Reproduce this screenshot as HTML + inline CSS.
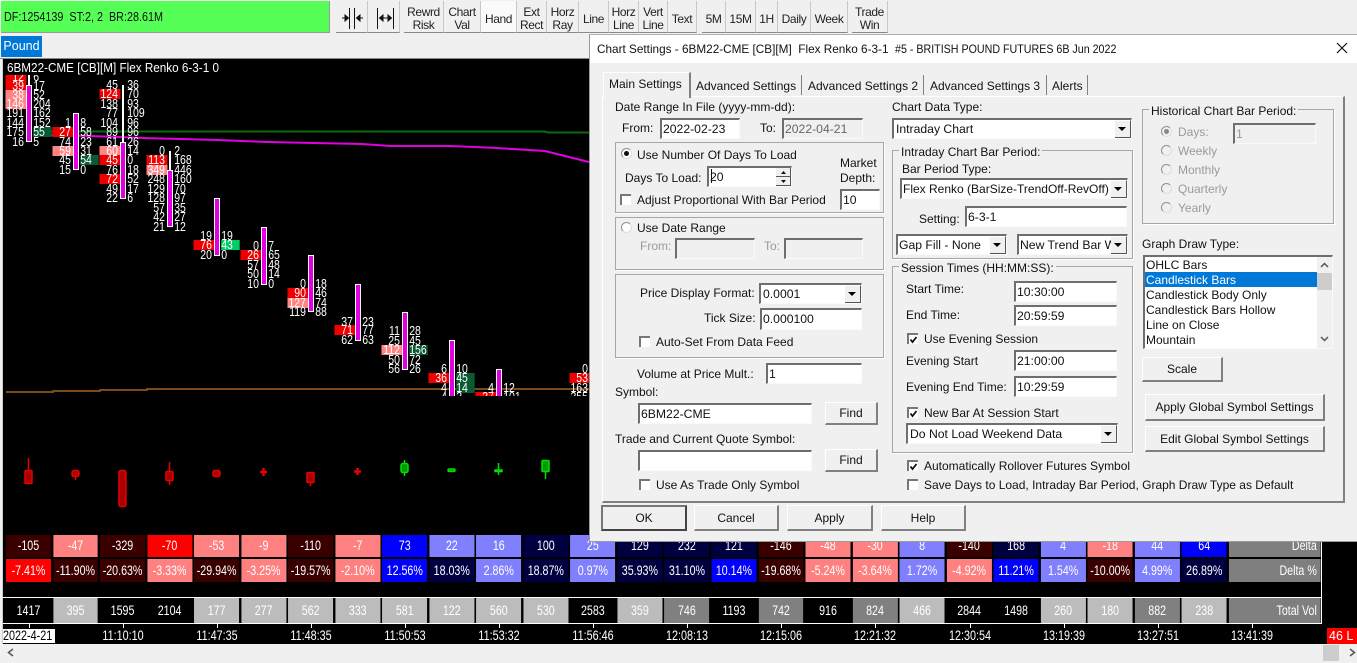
<!DOCTYPE html>
<html><head><meta charset="utf-8"><style>
html,body{margin:0;padding:0;width:1357px;height:663px;overflow:hidden;background:#f0f0f0;font-family:"Liberation Sans",sans-serif;color:#111}
div,span,p,svg{position:absolute;margin:0}
.t{font-size:12px;line-height:16px;white-space:nowrap;color:#111}
.dis{color:#9a9a9a}
.tb{top:1px;height:32px;background:#f0f0f0;border-right:1px solid #c8c8c8;border-bottom:1px solid #8a8a8a;box-sizing:border-box;font-size:12px;letter-spacing:-.4px;line-height:13px;text-align:center;display:flex;align-items:center;justify-content:center;color:#222;padding-top:5px}
.i{background:#fff;border-top:2px solid #6e6e6e;border-left:2px solid #6e6e6e;border-right:1px solid #fafafa;border-bottom:1px solid #fafafa;box-sizing:border-box;font-size:12.2px;line-height:18px;padding-left:1px;white-space:nowrap;overflow:hidden;color:#111}
.d{background:#f0f0f0;color:#666}
.a{right:0;top:0;bottom:0;width:16px;background:#f0f0f0;border-right:1px solid #555;border-bottom:1px solid #555;border-top:1px solid #fff;box-sizing:border-box}
.a:after{content:"";position:absolute;left:3px;top:6px;border:4px solid transparent;border-top:4px solid #000;border-bottom:0}
.g{border:1px solid #a6a6a6;box-shadow:1px 1px 0 #fff;box-sizing:border-box}
.b{background:#f0f0f0;border-top:1px solid #fff;border-left:1px solid #fff;border-right:2px solid #808080;border-bottom:2px solid #808080;box-sizing:border-box;font-size:12px;display:flex;align-items:center;justify-content:center;color:#111;white-space:nowrap}
.c{width:11px;height:11px;background:#fff;border-top:2px solid #777;border-left:2px solid #777;box-sizing:border-box}
.c svg{left:-1px;top:-1px}
.r{width:11px;height:11px;border-radius:50%;background:#fff;border:1px solid #909090;border-right-color:#ddd;border-bottom-color:#ddd;box-sizing:border-box}
.r.on:after{content:"";position:absolute;left:2px;top:2px;width:5px;height:5px;background:#111;border-radius:50%}
.r.off:after{background:#888}
.f{top:0;transform:scaleX(.84);transform-origin:0 0;font-size:12.5px;line-height:10px;color:#fff}
.f p{left:0;width:0;height:10px}
.f b{position:absolute;font-weight:normal;top:0;height:10px;white-space:nowrap;box-sizing:border-box}
.f b:first-child{right:3.5px;width:25px;text-align:right;padding-right:2.500px}
.f b:last-child{left:4.500px;width:22px;text-align:left;padding-left:.5px}
.R{background:#ee0000}.P{background:#ff8585}.G{background:#0a5a34}.L{background:#00cc66}
.w{width:2px;background:#fff}
.m{width:4px;background:#e000e0;border:1px solid #fff}
.row{left:6px;width:calc(1320px/.79);transform:scaleX(.79);transform-origin:0 0;display:flex;font-size:13.5px;color:#fff}
.row span{position:static;display:block;width:calc(45px/.79);margin-right:calc(2.04px/.79);flex:none;text-align:center}
.row span.l{width:calc(92px/.79);margin:0;text-align:right;padding-right:5px;box-sizing:border-box;background:#7f7f7f}
.K{background:#3a0000}.A{background:#ff8080}.E{background:#ff0000}.B{background:#0000ff}.V{background:#8080ff}.N{background:#000040}
.H{background:#000}.S{background:#bcbcbc}.M{background:#808080}
.tm{top:628px;line-height:15px;font-size:13.5px;color:#fff;transform:translateX(-50%) scaleX(.8);white-space:nowrap}
.tk{top:624px;width:1px;height:4px;background:#fff}
</style></head><body>

<div style="left:1px;top:1px;width:329px;height:32px;background:#55ff55;border-right:1px solid #999;border-bottom:1px solid #999;box-sizing:border-box"></div>
<div class="t" style="left:4px;top:9px;white-space:pre;font-size:13px;transform:scaleX(.83);transform-origin:0 0">DF:1254139  ST:2, 2  BR:28.61M</div>

<div class="tb" style="left:336px;width:32px"></div>
<div class="tb" style="left:368px;width:32px"></div>
<svg style="left:336px;top:1px" width="64" height="32" fill="none" stroke="#111" stroke-width="1"><path d="M13.500 7V28M18.500 7V28M6 17H12M21 17H27"/><path d="M9 14L12.500 17L9 20ZM24 14L20.500 17L24 20Z" fill="#111"/><path d="M41.500 7V28M57.500 7V28M44 17H55"/><path d="M47 14L43.500 17L47 20ZM52 14L55.500 17L52 20Z" fill="#111"/></svg>
<div class="tb" style="left:404px;width:40px">Rewrd<br>Risk</div>
<div class="tb" style="left:444px;width:37px">Chart<br>Val</div>
<div class="tb" style="left:481px;width:36px;background:#fafafa">Hand</div>
<div class="tb" style="left:517px;width:30px">Ext<br>Rect</div>
<div class="tb" style="left:547px;width:32px">Horz<br>Ray</div>
<div class="tb" style="left:579px;width:30px">Line</div>
<div class="tb" style="left:609px;width:30px">Horz<br>Line</div>
<div class="tb" style="left:639px;width:29px">Vert<br>Line</div>
<div class="tb" style="left:668px;width:29px">Text</div>
<div class="tb" style="left:702px;width:24px">5M</div>
<div class="tb" style="left:726px;width:30px">15M</div>
<div class="tb" style="left:756px;width:22px">1H</div>
<div class="tb" style="left:778px;width:33px">Daily</div>
<div class="tb" style="left:811px;width:37px">Week</div>
<div class="tb" style="left:852px;width:36px">Trade<br>Win</div>

<div style="left:1px;top:36px;width:41px;height:21px;background:#0078d7;color:#fff;font-size:12.5px;line-height:21px;text-align:center">Pound</div>
<div style="left:0;top:58px;width:1357px;height:1px;background:#888"></div>

<div style="left:2px;top:59px;width:1355px;height:585px;background:#000;border-left:1px solid #ccc"></div>
<div style="left:7px;top:60px;font-size:13px;line-height:16px;color:#fff;white-space:nowrap;transform:scaleX(.9);transform-origin:0 0">6BM22-CME [CB][M] Flex Renko 6-3-1 0</div>

<svg style="left:0;top:0" width="1357" height="663" fill="none">
<path d="M50 131.500H545L548 132.500H600" stroke="#0c6a0c" stroke-width="2"/>
<path d="M50 135L90 136L143 138L218 140L268 142L314 143L362 144L390 146L451 146L497 148L545 151L589 162" stroke="#e000e0" stroke-width="2"/>
<path d="M6 392H53V391H100V390H147V389H600" stroke="#7a4a1a" stroke-width="2"/>
<g stroke="#e60000" fill="#a80000" stroke-width="1.500">
<path d="M28.500 458V470M75.500 476V480M169.500 462V485M310.500 482V486M122.500 470V472"/>
<rect x="25" y="470.500" width="7" height="13" rx="1"/>
<rect x="72" y="470.500" width="7" height="6" rx="2"/>
<rect x="119" y="470.500" width="7" height="36" rx="2"/>
<rect x="166" y="471.500" width="7" height="9" rx="1"/>
<rect x="213" y="470.500" width="7" height="6" rx="2"/>
<path d="M263.500 468V476M260 472H267M357.500 468V475M354 471.500H361" stroke-width="2.500"/>
<rect x="307" y="472.500" width="7" height="10" rx="1"/>
</g>
<g stroke="#00e000" fill="#009a00" stroke-width="1.500">
<path d="M404.500 460V476M498.500 463V475M545.500 470V479"/>
<rect x="401" y="463.500" width="7" height="9" rx="2"/>
<rect x="448" y="469" width="7" height="2.500" rx="1.200"/>
<rect x="495" y="470" width="7" height="1.500"/>
<rect x="542" y="460.500" width="7" height="11" rx="1"/>
</g>
</svg>

<div style="left:0;top:0;width:600px;height:663px;clip-path:inset(75px 0 267px 0)">
<div class="f" style="left:29px">
<p style="top:72px"><b class="R">12</b><b>6</b></p><p style="top:81px"><b class="R">39</b><b>17</b></p><p style="top:90px"><b class="P">38</b><b>52</b></p><p style="top:99px"><b class="P">146</b><b>204</b></p><p style="top:108px"><b>191</b><b>162</b></p><p style="top:118px"><b>144</b><b>152</b></p><p style="top:127px"><b>175</b><b class="G">55</b></p><p style="top:137px"><b>16</b><b>5</b></p>
</div>
<div class="f" style="left:76px">
<p style="top:118px"><b>1</b><b>8</b></p><p style="top:127px"><b class="R">27</b><b>58</b></p><p style="top:137px"><b>74</b><b>23</b></p><p style="top:146px"><b class="P">59</b><b>31</b></p><p style="top:155px"><b>45</b><b class="G">54</b></p><p style="top:165px"><b>15</b><b>0</b></p>
</div>
<div class="f" style="left:123px">
<p style="top:80px"><b>45</b><b>36</b></p><p style="top:89px"><b class="R">124</b><b>70</b></p><p style="top:99px"><b>138</b><b>93</b></p><p style="top:108px"><b>77</b><b>109</b></p><p style="top:118px"><b>104</b><b>96</b></p><p style="top:127px"><b>89</b><b>96</b></p><p style="top:137px"><b>61</b><b>26</b></p><p style="top:146px"><b class="P">60</b><b>14</b></p><p style="top:155px"><b class="R">45</b><b>0</b></p><p style="top:165px"><b>76</b><b>18</b></p><p style="top:174px"><b class="R">72</b><b>52</b></p><p style="top:184px"><b>49</b><b>17</b></p><p style="top:193px"><b>22</b><b>6</b></p>
</div>
<div class="f" style="left:170px">
<p style="top:146px"><b>0</b><b>2</b></p><p style="top:155px"><b class="R">113</b><b>168</b></p><p style="top:165px"><b class="P">349</b><b>446</b></p><p style="top:174px"><b>248</b><b>160</b></p><p style="top:184px"><b>129</b><b>70</b></p><p style="top:193px"><b>128</b><b>97</b></p><p style="top:203px"><b>57</b><b>35</b></p><p style="top:212px"><b>42</b><b>27</b></p><p style="top:222px"><b>21</b><b>12</b></p>
</div>
<div class="f" style="left:217px">
<p style="top:231px"><b>19</b><b>19</b></p><p style="top:240px"><b class="R">76</b><b class="L">43</b></p><p style="top:250px"><b>20</b><b>0</b></p>
</div>
<div class="f" style="left:264px">
<p style="top:241px"><b>0</b><b>7</b></p><p style="top:250px"><b class="R">26</b><b>65</b></p><p style="top:260px"><b>57</b><b>48</b></p><p style="top:269px"><b>50</b><b>14</b></p><p style="top:279px"><b>10</b><b>0</b></p>
</div>
<div class="f" style="left:311px">
<p style="top:279px"><b>0</b><b>18</b></p><p style="top:288px"><b class="R">90</b><b>46</b></p><p style="top:298px"><b class="P">127</b><b>74</b></p><p style="top:307px"><b>119</b><b>88</b></p>
</div>
<div class="f" style="left:358px">
<p style="top:317px"><b>37</b><b>23</b></p><p style="top:325px"><b class="R">71</b><b>77</b></p><p style="top:335px"><b>62</b><b>63</b></p>
</div>
<div class="f" style="left:405px">
<p style="top:326px"><b>11</b><b>28</b></p><p style="top:336px"><b>25</b><b>45</b></p><p style="top:345px"><b class="P">112</b><b class="G">156</b></p><p style="top:355px"><b>50</b><b>72</b></p><p style="top:364px"><b>56</b><b>26</b></p>
</div>
<div class="f" style="left:452px">
<p style="top:364px"><b>6</b><b>10</b></p><p style="top:373px"><b class="R">36</b><b class="G">45</b></p><p style="top:383px"><b>4</b><b class="G">14</b></p><p style="top:392px"><b>4</b><b>3</b></p>
</div>
<div class="f" style="left:499px">
<p style="top:383px"><b>4</b><b>12</b></p><p style="top:392px"><b class="R">37</b><b>101</b></p>
</div>
<div class="f" style="left:593px">
<p style="top:364px"><b>0</b><b></b></p><p style="top:373px"><b class="R">53</b><b></b></p><p style="top:383px"><b>163</b><b></b></p><p style="top:392px"><b>355</b><b></b></p>
</div>
<div class="w" style="left:28px;top:75px;height:11px"></div><div class="m" style="left:26px;top:85px;height:55px"></div>
<div class="m" style="left:73px;top:113px;height:55px"></div>
<div class="w" style="left:122px;top:85px;height:58px"></div><div class="m" style="left:120px;top:142px;height:55px"></div>
<div class="w" style="left:169px;top:151px;height:20px"></div><div class="m" style="left:167px;top:170px;height:55px"></div>
<div class="m" style="left:214px;top:198px;height:56px"></div>
<div class="m" style="left:261px;top:227px;height:56px"></div>
<div class="m" style="left:308px;top:255px;height:55px"></div>
<div class="m" style="left:355px;top:284px;height:55px"></div>
<div class="m" style="left:402px;top:312px;height:56px"></div>
<div class="m" style="left:449px;top:340px;height:56px"></div>
<div class="m" style="left:496px;top:369px;height:56px"></div>
</div>

<div class="row" style="top:535px;height:22px;line-height:22px"><span class="K">-105</span><span class="A">-47</span><span class="K">-329</span><span class="E">-70</span><span class="A">-53</span><span class="A">-9</span><span class="K">-110</span><span class="A">-7</span><span class="B">73</span><span class="V">22</span><span class="V">16</span><span class="N">100</span><span class="V">25</span><span class="N">129</span><span class="N">232</span><span class="N">121</span><span class="K">-146</span><span class="A">-48</span><span class="A">-30</span><span class="V">8</span><span class="K">-140</span><span class="N">168</span><span class="V">4</span><span class="A">-18</span><span class="V">44</span><span class="B">64</span><span class="l">Delta</span></div>
<div class="row" style="top:559px;height:23px;line-height:23px"><span class="E">-7.41%</span><span class="K">-11.90%</span><span class="K">-20.63%</span><span class="A">-3.33%</span><span class="K">-29.94%</span><span class="A">-3.25%</span><span class="K">-19.57%</span><span class="A">-2.10%</span><span class="B">12.56%</span><span class="N">18.03%</span><span class="V">2.86%</span><span class="N">18.87%</span><span class="V">0.97%</span><span class="N">35.93%</span><span class="N">31.10%</span><span class="B">10.14%</span><span class="K">-19.68%</span><span class="A">-5.24%</span><span class="A">-3.64%</span><span class="V">1.72%</span><span class="A">-4.92%</span><span class="B">11.21%</span><span class="V">1.54%</span><span class="K">-10.00%</span><span class="V">4.99%</span><span class="N">26.89%</span><span class="l">Delta %</span></div>
<div style="left:3px;top:597px;width:1318px;height:1px;background:#fff"></div>
<div class="row" style="top:598px;height:25px;line-height:25px"><span class="H">1417</span><span class="S">395</span><span class="H">1595</span><span class="H">2104</span><span class="S">177</span><span class="S">277</span><span class="S">562</span><span class="S">333</span><span class="S">581</span><span class="S">122</span><span class="S">560</span><span class="S">530</span><span class="H">2583</span><span class="S">359</span><span class="M">746</span><span class="H">1193</span><span class="M">742</span><span class="H">916</span><span class="M">824</span><span class="S">466</span><span class="H">2844</span><span class="H">1498</span><span class="S">260</span><span class="S">180</span><span class="M">882</span><span class="S">238</span><span class="l">Total Vol</span></div>
<div style="left:3px;top:623px;width:1318px;height:1px;background:#fff"></div>
<div style="left:1321px;top:535px;width:1px;height:89px;background:#fff"></div>

<div class="tk" style="left:29px"></div><div class="tk" style="left:123px"></div><div class="tk" style="left:217px"></div><div class="tk" style="left:311px"></div><div class="tk" style="left:405px"></div><div class="tk" style="left:499px"></div><div class="tk" style="left:593px"></div><div class="tk" style="left:687px"></div><div class="tk" style="left:781px"></div><div class="tk" style="left:875px"></div><div class="tk" style="left:970px"></div><div class="tk" style="left:1064px"></div><div class="tk" style="left:1158px"></div><div class="tk" style="left:1252px"></div>
<div style="left:3px;top:629px;width:52px;height:14px;background:#fff;color:#000;font-size:13.5px;line-height:14px;white-space:nowrap"><span style="position:static;display:inline-block;transform:scaleX(.8);transform-origin:0 0">2022-4-21</span></div>
<div class="tm" style="left:123px">11:10:10</div><div class="tm" style="left:217px">11:47:35</div><div class="tm" style="left:311px">11:48:35</div><div class="tm" style="left:405px">11:50:53</div><div class="tm" style="left:499px">11:53:32</div><div class="tm" style="left:593px">11:56:46</div><div class="tm" style="left:687px">12:08:13</div><div class="tm" style="left:781px">12:15:06</div><div class="tm" style="left:875px">12:21:32</div><div class="tm" style="left:970px">12:30:54</div><div class="tm" style="left:1064px">13:19:39</div><div class="tm" style="left:1158px">13:27:51</div><div class="tm" style="left:1252px">13:41:39</div>
<div style="left:1327px;top:628px;width:30px;height:16px;background:#f00;color:#fff;font-size:12.5px;line-height:16px;overflow:hidden;padding-left:2px;box-sizing:border-box;white-space:nowrap">46 L E</div>

<div style="left:0;top:644px;width:1357px;height:19px;background:#f0f0f0"></div>
<div style="left:1323px;top:645px;width:16px;height:16px;background:#cdcdcd"></div>
<svg style="left:0;top:644px" width="1357" height="19" fill="none" stroke="#555" stroke-width="1.500"><path d="M13 5L8.500 8.500L13 12M1350 5L1354.500 8.500L1350 12"/></svg>

<!-- Dialog -->
<div style="left:589px;top:34px;width:768px;height:508px;background:#f0f0f0;border-left:1px solid #9a9a9a;border-top:1px solid #b0b0b0;border-bottom:1px solid #9a9a9a;box-sizing:border-box"></div>
<div style="left:590px;top:35px;width:767px;height:28px;background:#fff"></div>
<div class="t" style="left:597px;top:41px;white-space:pre;transform:scaleX(.98);transform-origin:0 0">Chart Settings - 6BM22-CME [CB][M]  Flex Renko 6-3-1</div>
<div class="t" style="left:895px;top:41px;white-space:pre;transform:scaleX(.89);transform-origin:0 0">#5 - BRITISH POUND FUTURES 6B Jun 2022</div>
<svg style="left:1336px;top:42px" width="12" height="12" stroke="#111" stroke-width="1.200"><path d="M1 1L11 11M11 1L1 11"/></svg>

<div style="left:602px;top:96px;width:743px;height:407px;box-sizing:border-box;border-left:1px solid #fff;border-top:1px solid #fff;border-right:2px solid #808080;border-bottom:2px solid #808080"></div>
<div style="left:603px;top:72px;width:88px;height:26px;background:#f0f0f0;border-left:1px solid #fff;border-top:1px solid #fff;border-right:2px solid #808080;box-sizing:border-box"></div>
<div class="t" style="left:609px;top:76px">Main Settings</div>
<div class="t" style="left:696px;top:78px">Advanced Settings</div>
<div style="left:801px;top:75px;width:1px;height:20px;background:#808080"></div>
<div class="t" style="left:808px;top:78px">Advanced Settings 2</div>
<div style="left:923px;top:75px;width:1px;height:20px;background:#808080"></div>
<div class="t" style="left:930px;top:78px">Advanced Settings 3</div>
<div style="left:1046px;top:75px;width:1px;height:20px;background:#808080"></div>
<div class="t" style="left:1052px;top:78px">Alerts</div>
<div style="left:1087px;top:75px;width:1px;height:20px;background:#808080"></div>

<!-- left column -->
<div class="t" style="left:615px;top:99px">Date Range In File (yyyy-mm-dd):</div>
<div class="t" style="left:622px;top:120px">From:</div>
<div class="i" style="left:660px;top:118px;width:80px;height:21px">2022-02-23</div>
<div class="t" style="left:760px;top:120px">To:</div>
<div class="i d" style="left:782px;top:118px;width:81px;height:21px">2022-04-21</div>

<div class="g" style="left:615px;top:142px;width:269px;height:71px"></div>
<div class="r on" style="left:621px;top:148px"></div>
<div class="t" style="left:637px;top:147px">Use Number Of Days To Load</div>
<div class="t" style="left:625px;top:170px">Days To Load:</div>
<div class="i" style="left:707px;top:166px;width:85px;height:21px">20<div style="right:0;top:0;width:15px;height:9px;background:#f0f0f0;border-right:1px solid #555;border-bottom:1px solid #555;box-sizing:border-box"></div><div style="right:0;top:9px;width:15px;height:9px;background:#f0f0f0;border-right:1px solid #555;border-bottom:1px solid #555;box-sizing:border-box"></div><svg style="right:4px;top:2px" width="7" height="14" fill="#111"><path d="M1 4L3.500 1L6 4ZM1 10L3.500 13L6 10Z"/></svg><div style="left:2px;top:1px;width:1px;height:14px;background:#111"></div></div>
<div class="t" style="left:840px;top:155px">Market</div>
<div class="t" style="left:840px;top:170px">Depth:</div>
<div class="i" style="left:840px;top:189px;width:40px;height:21px">10</div>
<div class="c" style="left:620px;top:194px"></div>
<div class="t" style="left:637px;top:192px">Adjust Proportional With Bar Period</div>

<div class="g" style="left:615px;top:217px;width:269px;height:53px"></div>
<div class="r" style="left:621px;top:222px"></div>
<div class="t" style="left:637px;top:220px">Use Date Range</div>
<div class="t dis" style="left:640px;top:238px">From:</div>
<div class="i d" style="left:675px;top:238px;width:80px;height:21px"></div>
<div class="t dis" style="left:764px;top:238px">To:</div>
<div class="i d" style="left:784px;top:238px;width:79px;height:21px"></div>

<div class="g" style="left:615px;top:274px;width:269px;height:84px"></div>
<div class="t" style="left:640px;top:285px">Price Display Format:</div>
<div class="i" style="left:759px;top:283px;width:103px;height:21px;padding-left:2px">0.0001<div class="a"></div></div>
<div class="t" style="left:704px;top:310px">Tick Size:</div>
<div class="i" style="left:760px;top:308px;width:102px;height:22px">0.000100</div>
<div class="c" style="left:639px;top:336px"></div>
<div class="t" style="left:656px;top:334px">Auto-Set From Data Feed</div>
<div class="t" style="left:637px;top:366px">Volume at Price Mult.:</div>
<div class="i" style="left:766px;top:363px;width:96px;height:21px">1</div>
<div class="t" style="left:615px;top:384px">Symbol:</div>
<div class="i" style="left:638px;top:403px;width:174px;height:21px">6BM22-CME</div>
<div class="b" style="left:825px;top:402px;width:53px;height:23px">Find</div>
<div class="t" style="left:615px;top:431px">Trade and Current Quote Symbol:</div>
<div class="i" style="left:638px;top:450px;width:174px;height:21px"></div>
<div class="b" style="left:825px;top:449px;width:53px;height:23px">Find</div>
<div class="c" style="left:639px;top:479px"></div>
<div class="t" style="left:656px;top:477px">Use As Trade Only Symbol</div>

<!-- middle column -->
<div class="t" style="left:892px;top:99px">Chart Data Type:</div>
<div class="i" style="left:892px;top:118px;width:240px;height:21px;padding-left:2px">Intraday Chart<div class="a"></div></div>
<div class="g" style="left:892px;top:150px;width:241px;height:109px"></div>
<div class="t" style="left:899px;top:144px;background:#f0f0f0;padding:0 2px">Intraday Chart Bar Period:</div>
<div class="t" style="left:902px;top:161px">Bar Period Type:</div>
<div class="i" style="left:900px;top:178px;width:228px;height:21px;padding-left:1px;font-size:12px">Flex Renko (BarSize-TrendOff-RevOff)<div class="a"></div></div>
<div class="t" style="left:919px;top:211px">Setting:</div>
<div class="i" style="left:965px;top:206px;width:162px;height:21px">6-3-1</div>
<div class="i" style="left:896px;top:234px;width:111px;height:21px;padding-left:1px">Gap Fill - None<div class="a"></div></div>
<div class="i" style="left:1017px;top:234px;width:111px;height:21px">New Trend Bar W<div class="a"></div></div>

<div class="g" style="left:892px;top:266px;width:241px;height:187px"></div>
<div class="t" style="left:899px;top:260px;background:#f0f0f0;padding:0 2px">Session Times (HH:MM:SS):</div>
<div class="t" style="left:906px;top:281px">Start Time:</div>
<div class="i" style="left:1014px;top:281px;width:103px;height:21px">10:30:00</div>
<div class="t" style="left:906px;top:307px">End Time:</div>
<div class="i" style="left:1014px;top:305px;width:103px;height:21px">20:59:59</div>
<div class="c" style="left:907px;top:333px"><svg width="11" height="11" fill="none" stroke="#111" stroke-width="1.800"><path d="M2.500 5.500L4.500 8L8.500 3"/></svg></div>
<div class="t" style="left:924px;top:331px">Use Evening Session</div>
<div class="t" style="left:906px;top:353px">Evening Start</div>
<div class="i" style="left:1014px;top:350px;width:103px;height:21px">21:00:00</div>
<div class="t" style="left:906px;top:379px">Evening End Time:</div>
<div class="i" style="left:1014px;top:376px;width:103px;height:21px">10:29:59</div>
<div class="c" style="left:907px;top:407px"><svg width="11" height="11" fill="none" stroke="#111" stroke-width="1.800"><path d="M2.500 5.500L4.500 8L8.500 3"/></svg></div>
<div class="t" style="left:924px;top:405px">New Bar At Session Start</div>
<div class="i" style="left:906px;top:423px;width:212px;height:21px;padding-left:2px">Do Not Load Weekend Data<div class="a"></div></div>
<div class="c" style="left:907px;top:460px"><svg width="11" height="11" fill="none" stroke="#111" stroke-width="1.800"><path d="M2.500 5.500L4.500 8L8.500 3"/></svg></div>
<div class="t" style="left:924px;top:458px">Automatically Rollover Futures Symbol</div>
<div class="c" style="left:907px;top:479px"></div>
<div class="t" style="left:924px;top:477px">Save Days to Load, Intraday Bar Period, Graph Draw Type as Default</div>

<!-- right column -->
<div class="g" style="left:1142px;top:109px;width:192px;height:115px"></div>
<div class="t" style="left:1149px;top:103px;background:#f0f0f0;padding:0 2px">Historical Chart Bar Period:</div>
<div class="r on off" style="left:1161px;top:126px;background:#f0f0f0"></div><div class="t dis" style="left:1178px;top:124px">Days:</div>
<div class="i d" style="left:1233px;top:123px;width:83px;height:21px;color:#999">1</div>
<div class="r" style="left:1161px;top:145px;background:#f0f0f0"></div><div class="t dis" style="left:1178px;top:143px">Weekly</div>
<div class="r" style="left:1161px;top:164px;background:#f0f0f0"></div><div class="t dis" style="left:1178px;top:162px">Monthly</div>
<div class="r" style="left:1161px;top:183px;background:#f0f0f0"></div><div class="t dis" style="left:1178px;top:181px">Quarterly</div>
<div class="r" style="left:1161px;top:202px;background:#f0f0f0"></div><div class="t dis" style="left:1178px;top:200px">Yearly</div>
<div class="t" style="left:1142px;top:236px">Graph Draw Type:</div>
<div class="i" style="left:1143px;top:255px;width:190px;height:94px;padding:0"></div>
<div style="left:1145px;top:272px;width:172px;height:15px;background:#0078d7"></div>
<div class="t" style="left:1146px;top:257px">OHLC Bars</div>
<div class="t" style="left:1146px;top:272px;color:#fff">Candlestick Bars</div>
<div class="t" style="left:1146px;top:287px">Candlestick Body Only</div>
<div class="t" style="left:1146px;top:302px">Candlestick Bars Hollow</div>
<div class="t" style="left:1146px;top:317px">Line on Close</div>
<div class="t" style="left:1146px;top:332px">Mountain</div>
<div style="left:1317px;top:257px;width:15px;height:91px;background:#f0f0f0"></div>
<div style="left:1317px;top:273px;width:15px;height:17px;background:#cdcdcd"></div>
<svg style="left:1317px;top:257px" width="15" height="91" fill="none" stroke="#555" stroke-width="1.500"><path d="M4 10L7.500 6.500L11 10M4 80L7.500 83.500L11 80"/></svg>
<div class="b" style="left:1142px;top:357px;width:81px;height:25px">Scale</div>
<div class="b" style="left:1145px;top:394px;width:180px;height:27px">Apply Global Symbol Settings</div>
<div class="b" style="left:1145px;top:426px;width:180px;height:26px">Edit Global Symbol Settings</div>

<div class="b" style="left:601px;top:505px;width:86px;height:26px;border:2px solid #555;border-color:#777 #444 #444 #777">OK</div>
<div class="b" style="left:694px;top:505px;width:85px;height:26px">Cancel</div>
<div class="b" style="left:787px;top:505px;width:86px;height:26px">Apply</div>
<div class="b" style="left:881px;top:505px;width:85px;height:26px">Help</div>
</body></html>
